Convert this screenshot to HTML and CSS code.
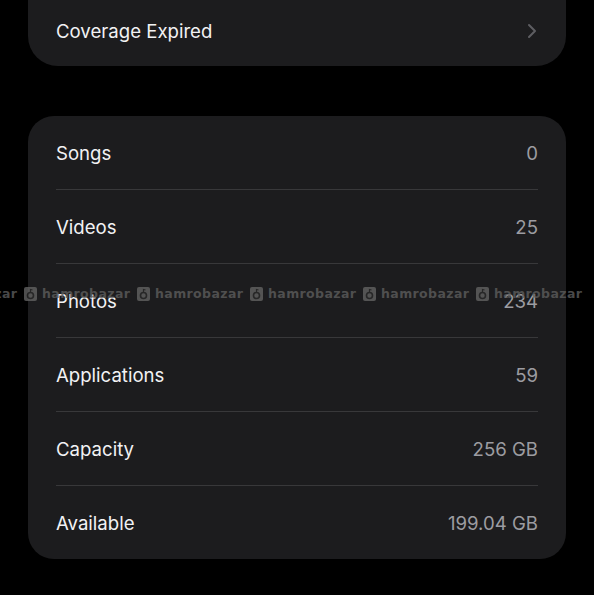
FILE: index.html
```html
<!DOCTYPE html>
<html lang="en">
<head>
    <meta charset="UTF-8">
    <meta name="viewport" content="width=device-width, initial-scale=1.0">
    <title>About - Coverage</title>
    <link rel="stylesheet" href="styles.css">
</head>
<body>
    <div class="page">
        <div class="card card-top">
            <div class="row">
                <span class="label">Coverage Expired</span>
                <svg class="chevron" width="10" height="16" viewBox="0 0 10 16">
                    <path d="M2 2 L8 8 L2 14" fill="none" stroke="#5e5e62" stroke-width="2" stroke-linecap="round" stroke-linejoin="round"/>
                </svg>
            </div>
        </div>

        <div class="card">
            <div class="row"><span class="label">Songs</span><span class="value">0</span></div>
            <div class="row"><span class="label">Videos</span><span class="value">25</span></div>
            <div class="row"><span class="label">Photos</span><span class="value">234</span></div>
            <div class="row"><span class="label">Applications</span><span class="value">59</span></div>
            <div class="row"><span class="label">Capacity</span><span class="value">256 GB</span></div>
            <div class="row"><span class="label">Available</span><span class="value">199.04 GB</span></div>
        </div>
    </div>

    <div class="watermark" id="watermark"></div>

    <script>
        let mark = document.getElementById("watermark");
        for (let i = 0; i < 6; i++) {
            let item = document.createElement("span");
            item.className = "mark";
            item.innerHTML = `
                <svg width="13" height="14" viewBox="0 0 13 14">
                    <rect x="0" y="0" width="13" height="14" rx="2" fill="#626262"/>
                    <circle cx="6.5" cy="8.5" r="3" fill="none" stroke="#2a2a2a" stroke-width="1.6"/>
                    <path d="M6.5 5.5 L6.5 2.5 L8.5 3" fill="none" stroke="#2a2a2a" stroke-width="1.2"/>
                </svg>
                <b>hamrobazar</b>`;
            mark.appendChild(item);
        }
    </script>
</body>
</html>
```

FILE: styles.css
```css
body {
    margin: 0;
    background: #000;
    font-family: Inter, "Noto Sans", sans-serif;
    overflow: hidden;
}
.page {
    display: flex;
    flex-direction: column;
    gap: 50px;
    padding: 0 28px;
    margin-top: -8px;
}
.card {
    background: #1c1c1e;
    border-radius: 26px;
    padding: 0 28px;
}
.card-top {
    border-radius: 0 0 30px 30px;
}
.card-top .row {
    height: 70px;
    padding-top: 4px;
    border: none;
}
.row {
    display: flex;
    justify-content: space-between;
    align-items: center;
    height: 73px;
    border-bottom: 1px solid #38383a;
    font-size: 18.6px;
}
.row:last-child {
    border-bottom: none;
}
.label {
    color: #f2f2f4;
}
.value {
    color: #9c9ca1;
}
.chevron {
    margin-right: 1px;
}
.watermark {
    position: absolute;
    top: 286px;
    left: -89px;
    display: flex;
    gap: 7px;
    pointer-events: none;
}
.mark {
    display: flex;
    align-items: center;
    gap: 5px;
    opacity: 0.8;
}
.mark b {
    font-family: "DejaVu Sans", sans-serif;
    font-weight: bold;
    font-size: 12.5px;
    letter-spacing: 0.4px;
    color: #5c5c5c;
    width: 88px;
}
```
